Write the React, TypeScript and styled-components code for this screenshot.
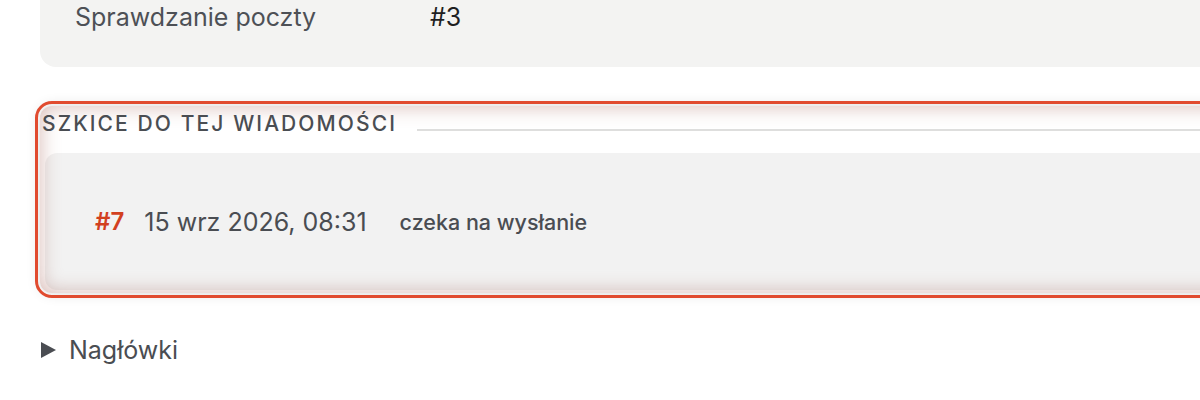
import React from 'react';
import styled, { createGlobalStyle } from 'styled-components';

const GlobalStyle = createGlobalStyle`
  html, body {
    margin: 0;
    padding: 0;
    background: #ffffff;
    overflow: hidden;
  }
  body {
    font-family: 'Inter', 'Liberation Sans', sans-serif;
    color: #4a4d52;
  }
`;

const Page = styled.div`
  width: 1260px;
  padding-left: 40px;
  box-sizing: border-box;
`;

const InfoCard = styled.div`
  background: #f3f3f2;
  border-radius: 0 0 0 16px;
  padding: 0 0 0 35px;
  height: 67px;
  box-sizing: border-box;
`;

const InfoRow = styled.div`
  display: grid;
  grid-template-columns: 355px 1fr;
  align-items: center;
  height: 34px;
  font-size: 25px;
`;

const InfoLabel = styled.div`
  color: #4d5056;
`;

const InfoValue = styled.div`
  color: #1e1f22;
`;

const Highlight = styled.section`
  margin-top: 39px;
  border-radius: 12px;
  outline: 3.5px solid #e14b2f;
  outline-offset: 2px;
  background: #ffffff;
  box-shadow: 0 0 14px rgba(0, 0, 0, 0.16), inset 0 0 20px rgba(165, 95, 85, 0.45);
  padding: 0 0 3px 0;
`;

const SectionTitle = styled.h3`
  display: flex;
  align-items: center;
  margin: 0;
  padding: 2px 0 0 2px;
  height: 30px;
  font-size: 21px;
  font-weight: 500;
  letter-spacing: 0.1em;
  text-transform: uppercase;
  color: #4a4d52;

  &::after {
    content: '';
    flex: 1;
    margin-left: 20px;
    margin-top: 14px;
    border-top: 2px solid #dededd;
  }
`;

const DraftCard = styled.div`
  margin: 15px 0 0 5px;
  height: 137px;
  border-radius: 12px 0 0 12px;
  background: rgba(0, 0, 0, 0.05);
  display: flex;
  align-items: center;
  padding-left: 50px;
`;

const DraftId = styled.span`
  color: #d2401f;
  font-weight: 600;
  font-size: 24px;
  margin-right: 20px;
`;

const DraftDate = styled.span`
  font-size: 25px;
  color: #4a4d52;
  margin-right: 33px;
`;

const DraftStatus = styled.span`
  font-size: 21.5px;
  font-weight: 500;
  color: #4a4d52;
`;

const Details = styled.details`
  margin-top: 42px;
`;

const Summary = styled.summary`
  list-style: none;
  display: flex;
  align-items: center;
  gap: 13px;
  padding-left: 1px;
  font-size: 25px;
  color: #4a4d52;
  cursor: pointer;

  &::-webkit-details-marker {
    display: none;
  }
`;

const Arrow = styled.span`
  width: 0;
  height: 0;
  border-top: 8px solid transparent;
  border-bottom: 8px solid transparent;
  border-left: 15px solid #4a4d52;
`;

export default function App() {
  return (
    <Page>
      <GlobalStyle />
      <InfoCard>
        <InfoRow>
          <InfoLabel>Sprawdzanie poczty</InfoLabel>
          <InfoValue>#3</InfoValue>
        </InfoRow>
      </InfoCard>

      <Highlight>
        <SectionTitle>Szkice do tej wiadomości</SectionTitle>
        <DraftCard>
          <DraftId>#7</DraftId>
          <DraftDate>15 wrz 2026, 08:31</DraftDate>
          <DraftStatus>czeka na wysłanie</DraftStatus>
        </DraftCard>
      </Highlight>

      <Details>
        <Summary>
          <Arrow />
          Nagłówki
        </Summary>
      </Details>
    </Page>
  );
}
